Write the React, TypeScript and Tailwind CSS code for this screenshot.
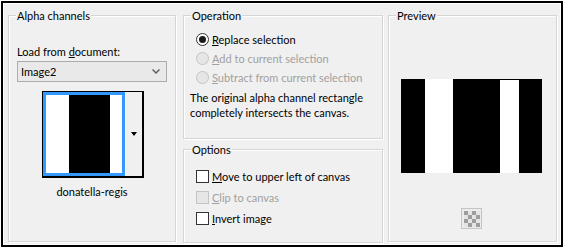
import React from "react";

function Group({
  label,
  className = "",
  children,
}: {
  label: string;
  className?: string;
  children?: React.ReactNode;
}) {
  return (
    <div className={`relative border border-[#d5d5d5] shadow-[inset_1px_1px_0_#ffffff,1px_1px_0_#ffffff] ${className}`}>
      <span className="absolute left-[7px] top-[-8px] bg-[#f0f0f0] px-px leading-[15px]">{label}</span>
      {children}
    </div>
  );
}

function Radio({ checked, disabled, children }: { checked?: boolean; disabled?: boolean; children: React.ReactNode }) {
  return (
    <div className="flex h-[19px] items-center gap-[3px]">
      <span
        className={`flex h-[13px] w-[13px] items-center justify-center rounded-full border ${
          disabled ? "border-[#c4c4c4] bg-[#e6e6e6]" : "border-[#333333] bg-white"
        }`}
      >
        {checked && <span className="h-[7px] w-[7px] rounded-full bg-[#1a1a1a]" />}
      </span>
      <span className={`leading-[15px] ${disabled ? "text-[#a0a0a0]" : ""}`}>{children}</span>
    </div>
  );
}

function Check({ disabled, children }: { disabled?: boolean; children: React.ReactNode }) {
  return (
    <div className="flex h-[21px] items-center gap-[3px]">
      <span
        className={`h-[13px] w-[13px] border ${disabled ? "border-[#c4c4c4] bg-[#e6e6e6]" : "border-[#333333] bg-white"}`}
      />
      <span className={`leading-[15px] ${disabled ? "text-[#a0a0a0]" : ""}`}>{children}</span>
    </div>
  );
}

function CheckerIcon() {
  const cells = [];
  for (let r = 0; r < 4; r++) {
    for (let c = 0; c < 4; c++) {
      cells.push(
        <rect
          key={`${r}-${c}`}
          x={3 + c * 4}
          y={3 + r * 4}
          width="4"
          height="4"
          fill={(r + c) % 2 === 0 ? "#9c9c9c" : "#e4e4e4"}
        />
      );
    }
  }
  return (
    <svg width="21" height="21" viewBox="0 0 21 21">
      <rect x="0.5" y="0.5" width="20" height="20" fill="#ececec" stroke="#c4c4c4" />
      {cells}
    </svg>
  );
}

export default function App() {
  return (
    <div className="h-[249px] w-[564px] bg-white pl-px pt-px font-['Lato','Liberation_Sans',sans-serif] text-[11px] text-black">
      <div className="h-[246px] w-[562px] border-2 border-black bg-white p-px">
        <div className="flex h-full bg-[#f0f0f0] pl-[4px] pt-[11px]">
          {/* Alpha channels */}
          <Group label="Alpha channels" className="h-[227px] w-[168px]">
            <div className="pl-[8px] pt-[28px] leading-[15px]">
              Load from <u>d</u>ocument:
            </div>
            <div className="ml-[8px] mt-[2px] flex h-[21px] w-[150px] items-center justify-between border border-[#acacac] bg-[#e9e9e9] pl-[3px] pr-[6px]">
              <span className="leading-[15px]">Image2</span>
              <svg width="8" height="5" viewBox="0 0 8 5">
                <polyline points="0.5,0.5 4,4 7.5,0.5" fill="none" stroke="#606060" strokeWidth="1.5" />
              </svg>
            </div>
            <div className="ml-[33px] mt-[9px] flex h-[87px] w-[102px] border-b-2 border-l border-r-2 border-t border-black">
              <div className="flex h-full w-[82px] border-[3px] border-[#3399ff]">
                <div className="w-[23px] bg-white" />
                <div className="w-[41px] bg-black" />
                <div className="flex-1 bg-white" />
              </div>
              <div className="flex flex-1 items-center justify-center border-l border-white bg-[#f0f0f0]">
                <span className="h-0 w-0 border-x-[3px] border-t-[4px] border-x-transparent border-t-black" />
              </div>
            </div>
            <div className="mt-[6px] text-center leading-[15px]">donatella-regis</div>
          </Group>

          {/* Operation + Options */}
          <div className="ml-[7px] flex w-[200px] flex-col">
            <Group label="Operation" className="h-[124px]">
              <div className="pl-[12px] pt-[14px]">
                <Radio checked>
                  <u>R</u>eplace selection
                </Radio>
                <Radio disabled>
                  <u>A</u>dd to current selection
                </Radio>
                <Radio disabled>
                  <u>S</u>ubtract from current selection
                </Radio>
              </div>
              <div className="mt-[3px] pl-[6px] leading-[15px]">
                The original alpha channel rectangle
                <br />
                completely intersects the canvas.
              </div>
            </Group>
            <Group label="Options" className="mt-[10px] h-[94px]">
              <div className="pl-[12px] pt-[16px]">
                <Check>
                  <u>M</u>ove to upper left of canvas
                </Check>
                <Check disabled>
                  <u>C</u>lip to canvas
                </Check>
                <Check>
                  <u>I</u>nvert image
                </Check>
              </div>
            </Group>
          </div>

          {/* Preview */}
          <Group label="Preview" className="ml-[5px] h-[227px] w-[169px]">
            <div className="ml-[12px] mt-[63px] flex h-[94px] w-[141px]">
              <div className="w-[24px] bg-black" />
              <div className="w-[28px] bg-white" />
              <div className="w-[47px] bg-black" />
              <div className="flex w-[19px] flex-col bg-black">
                <div className="mt-px flex-1 bg-white" />
              </div>
              <div className="w-[23px] bg-black" />
            </div>
            <div className="ml-[72px] mt-[35px] h-[21px] w-[21px]">
              <CheckerIcon />
            </div>
          </Group>
        </div>
      </div>
    </div>
  );
}
